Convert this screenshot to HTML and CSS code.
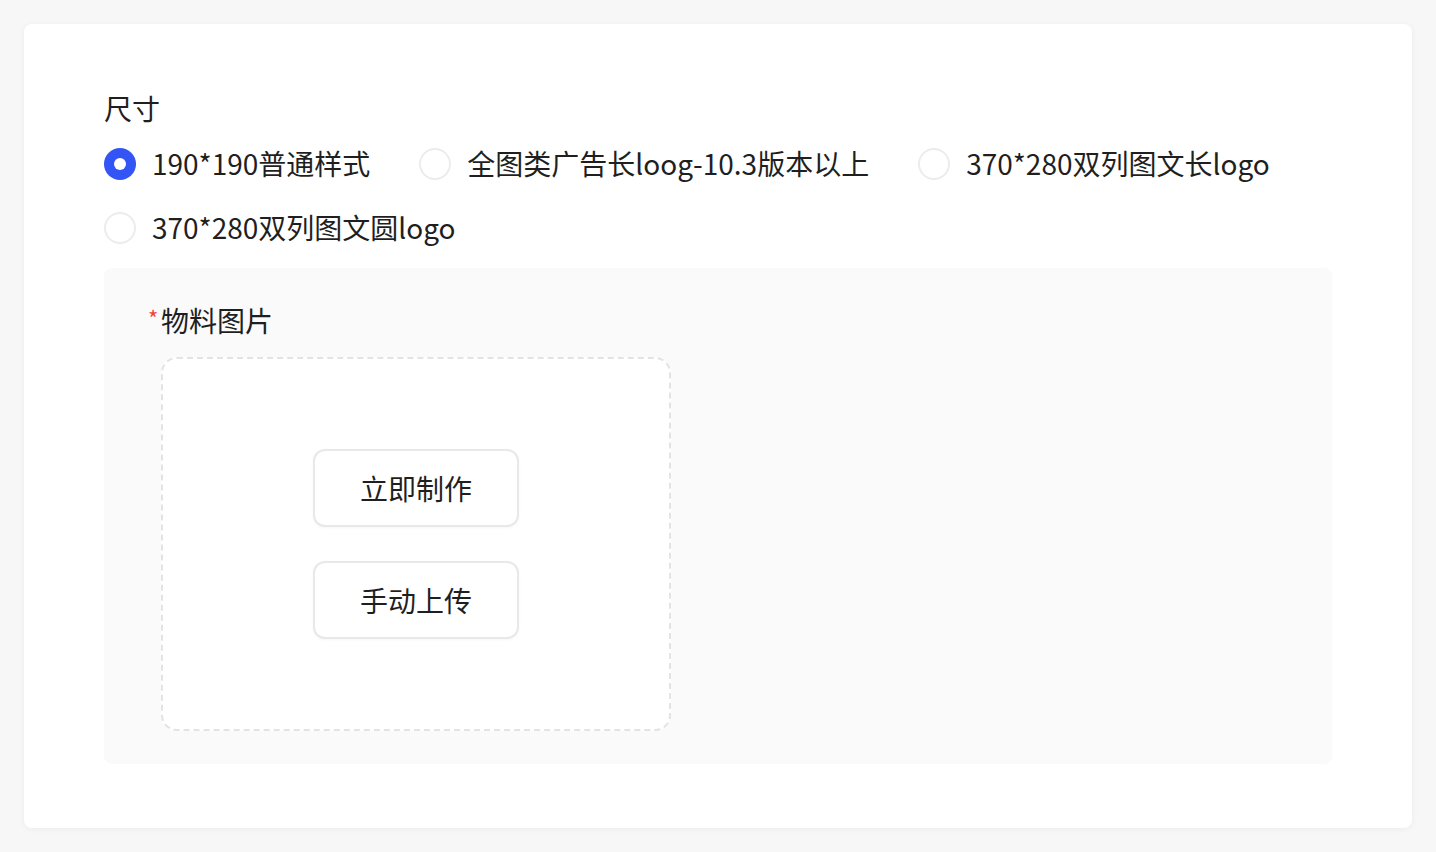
FILE: index.html
```html
<!DOCTYPE html>
<html lang="zh-CN">
<head>
<meta charset="utf-8">
<title>尺寸</title>
<link rel="stylesheet" href="styles.css">
</head>
<body>
<div class="card">
  <div class="label">尺寸</div>
  <div class="radio-group">
    <div class="radio-item"><span class="radio checked"></span><span class="radio-text">190*190普通样式</span></div>
    <div class="radio-item"><span class="radio"></span><span class="radio-text">全图类广告长loog-10.3版本以上</span></div>
    <div class="radio-item"><span class="radio"></span><span class="radio-text">370*280双列图文长logo</span></div>
    <div class="radio-item"><span class="radio"></span><span class="radio-text">370*280双列图文圆logo</span></div>
  </div>
  <div class="section">
    <div class="section-label"><span class="required">*</span>物料图片</div>
    <div class="upload-box">
      <button class="btn">立即制作</button>
      <button class="btn">手动上传</button>
    </div>
  </div>
</div>
</body>
</html>
```

FILE: styles.css
```css
* { box-sizing: border-box; }
html, body { margin: 0; }
body {
  background: #f7f7f7;
  padding: 24px;
  font-family: "Noto Sans CJK SC", "Noto Sans", sans-serif;
  color: #1f1f1f;
}
.card {
  background: #fff;
  border-radius: 8px;
  box-shadow: 0 1px 6px rgba(0, 0, 0, 0.05);
  padding: 64px 80px 64px 80px;
  height: 804px;
}
.label {
  font-size: 28px;
  line-height: 40px;
  height: 40px;
}
.radio-group {
  display: flex;
  flex-wrap: wrap;
  column-gap: 49px;
  row-gap: 24px;
  margin-top: 16px;
}
.radio-item {
  display: flex;
  align-items: center;
  gap: 16px;
  height: 40px;
}
.radio {
  width: 32px;
  height: 32px;
  border-radius: 50%;
  border: 2px solid #ececec;
  background: #fff;
  flex: none;
  position: relative;
}
.radio.checked {
  border: none;
  background: #3355f5;
}
.radio.checked::after {
  content: "";
  position: absolute;
  left: 10px;
  top: 10px;
  width: 12px;
  height: 12px;
  border-radius: 50%;
  background: #fff;
}
.radio-text {
  font-size: 28px;
  line-height: 40px;
  white-space: nowrap;
  position: relative;
  top: -1px;
}
.section {
  margin-top: 20px;
  background: #fafafa;
  border-radius: 8px;
  padding: 32px 44px 33px 44px;
  height: 496px;
}
.section-label {
  font-size: 28px;
  line-height: 40px;
  height: 40px;
  display: flex;
  align-items: center;
}
.required {
  color: #f5413b;
  font-size: 22px;
  width: 13px;
  line-height: 1;
  margin-top: -6px;
}
.upload-box {
  margin-top: 17px;
  margin-left: 13px;
  width: 510px;
  height: 374px;
  background: #fff;
  border: 2px dashed #e3e3e3;
  border-radius: 16px;
  display: flex;
  flex-direction: column;
  align-items: center;
  justify-content: center;
  gap: 34px;
}
.btn {
  width: 206px;
  height: 78px;
  background: #fff;
  border: 2px solid #e8e8e8;
  border-radius: 12px;
  box-shadow: 0 1px 3px rgba(0, 0, 0, 0.04);
  font-family: "Noto Sans CJK SC", "Noto Sans", sans-serif;
  font-size: 28px;
  color: #1f1f1f;
  padding: 0;
  cursor: pointer;
}
```
